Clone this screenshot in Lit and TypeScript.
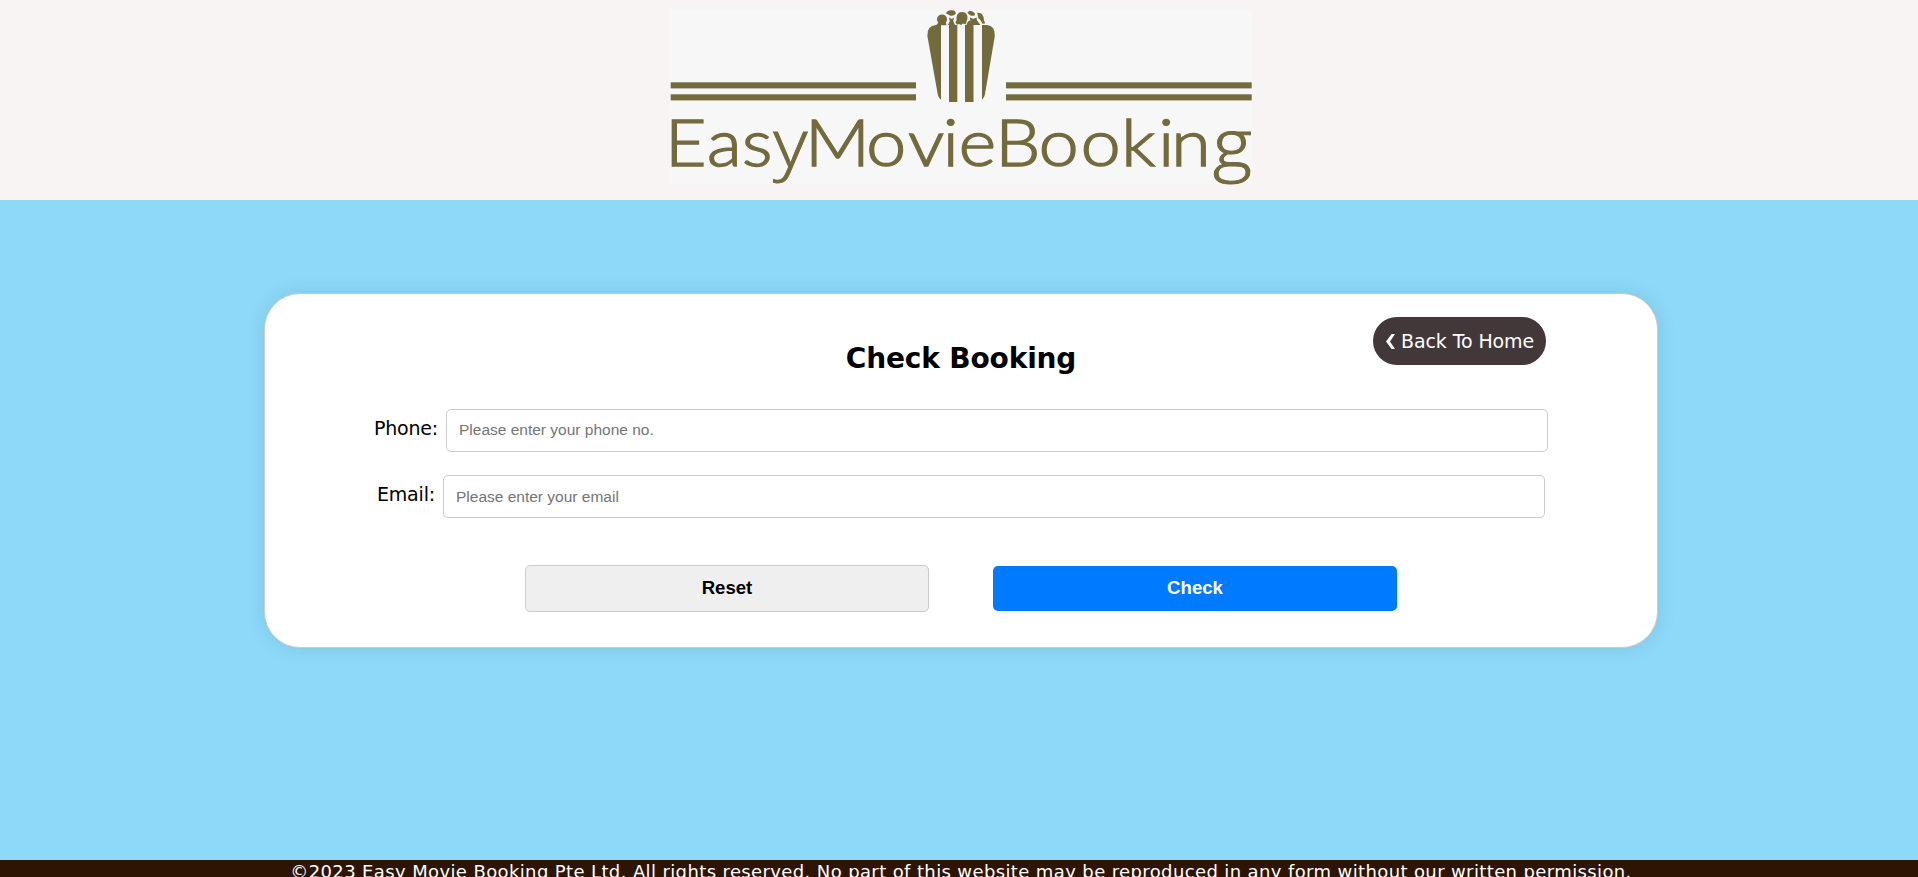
import { LitElement, html, css } from "lit";
import { customElement } from "lit/decorators.js";

const STRETCH = 1.1;
const stops = (...xs: number[]) => xs.map((x) => (x / STRETCH).toFixed(2)).join(" ");

@customElement("brand-logo")
class BrandLogo extends LitElement {
  static styles = css`
    :host { display: block; width: 582px; height: 174px; background: #f7f7f7; }
    svg { display: block; overflow: visible; }
    .ink { fill: #736a3e; }
    .word { fill: #736a3e; stroke: #736a3e; stroke-width: 1.5px; font-family: Lato, sans-serif; font-weight: 300; font-size: 65px; }
    .tail { font-family: "Open Sans", sans-serif; font-size: 67px; stroke-width: 1px; }
    .g { font-size: 68px; }
  `;
  render() {
    return html`<svg width="582" height="174" viewBox="670 10 582 174">
      <g class="ink">
        <rect x="670.7" y="82.3" width="245.3" height="6.1" />
        <rect x="670.7" y="94.3" width="245.3" height="6.1" />
        <rect x="1006" y="82.3" width="245.7" height="6.1" />
        <rect x="1006" y="94.3" width="245.7" height="6.1" />
        <path d="M941 25V99.4Q938.6 98.5 937.7 94L927.4 36Q926.8 25.6 936 25Z" />
        <path d="M982 25V99.4Q983.8 98.5 985 94L994.8 36Q995.2 25.6 987 25Z" />
        <rect x="949" y="25" width="8.3" height="77" />
        <rect x="965" y="25" width="8.5" height="77" />
        <path d="M936.2 25.2L938.2 22.7A5 5 0 1 1 945.8 22.7L946.6 25.2Z" />
        <path d="M945.8 13.2Q947.6 9.8 952 10.2Q955.8 10.6 955.8 13.5Q953 16.8 949.5 15.2Z" />
        <path d="M949 17.6L951.8 19L954.2 17.4L953.2 21L955 25H947.8L949.8 21.5Z" />
        <path d="M956.5 20.5Q955.8 12.2 962 12Q968.3 12.4 967.4 19L965.6 24.3L963 23.4L961 25L959 24L957 24.8L955.4 22Z" />
        <path d="M967.4 12.4Q970 9.9 973.3 12.1Q975.8 13.5 974.5 15.4Q971 16.6 969.2 14.4Z" />
        <path d="M966.4 25Q967.5 20.4 970.6 20.5L969.6 17.4L973.2 18.8L976.8 17.6L976.8 20L980.4 25Z" />
        <path d="M977.2 12.8Q982 12.5 983.6 17.2Q983.4 19.5 985.2 23.5L982.3 23.7Q980.6 19 978.4 18.4Z" />
      </g>
      <text class="word" transform="scale(1.1 1)" y="166 166 166 167.5 166 166 166 166 166 166 166 166 166 166 166 168"
        x=${stops(665, 707, 742, 773.5, 805, 866.3, 908.3, 942.8, 958.8, 995.3, 1038.8, 1080.8, 1121.3, 1158.3, 1171.3, 1213)}
      >Eas<tspan class="tail">y</tspan>MovieBookin<tspan class="tail g">g</tspan></text>
    </svg>`;
  }
}

@customElement("app-root")
class AppRoot extends LitElement {
  static styles = css`
    :host { display: flex; flex-direction: column; height: 877px; overflow: hidden; background: #8dd9f9; font-family: Verdana, "DejaVu Sans", sans-serif; color: #000; }
    * { box-sizing: border-box; }
    .top { height: 200px; flex: none; background: #f8f4f3; display: flex; justify-content: center; padding-top: 10px; padding-left: 4px; }
    .main { height: 660px; flex: none; padding: 93px 260px 0 264px; }
    .card { width: 1394px; height: 355px; border: 1px solid #ccc; border-radius: 36px; background: #fff; box-shadow: 0 0 20px rgba(0,0,0,.1); padding: 23px 109px 0 109px; }
    .head { display: grid; grid-template-columns: 1fr auto 1fr; height: 92px; align-items: start; }
    h2 { grid-column: 2; margin: 23px 0 0; font-size: 28px; line-height: 37px; font-weight: 700; white-space: nowrap; letter-spacing: -0.15px; }
    .back { justify-self: end; margin-right: 2px; width: 173px; height: 48px; border-radius: 24px; background: #433839; color: #fff; display: flex; align-items: center; padding-left: 12.5px; gap: 6.5px; font-size: 19px; letter-spacing: -0.1px; text-decoration: none; white-space: nowrap; }
    .row { display: flex; height: 66px; align-items: flex-start; white-space: nowrap; }
    .row label { flex: none; width: 72px; line-height: 38px; font-size: 19px; letter-spacing: -0.2px; }
    .row.email { padding-left: 3px; }
    .row.email label { width: 66px; }
    input { flex: none; width: 1102px; height: 43px; border: 1px solid #ccc; border-radius: 5px; padding: 0 12px 1px; font: 15.5px "Liberation Sans", Arial, sans-serif; background: #fff; outline: 0; }
    .email input { padding-bottom: 0; }
    input::placeholder { color: #757575; opacity: 1; }
    .actions { display: flex; gap: 64px; padding: 24px 0 0 151px; align-items: center; }
    button { height: 47px; width: 404px; border-radius: 5px; border: 1px solid #ccc; background: #efefef; font: 700 18.6px "Liberation Sans", Arial, sans-serif; padding: 0 0 2px; color: #000; }
    .check { height: 45px; border: 0; background: #007bff; color: #fff; }
    footer { height: 40px; flex: none; background: #2e1503; color: #fff; text-align: center; font-size: 18px; letter-spacing: 0.38px; line-height: 23px; white-space: nowrap; padding-left: 4px; }
  `;
  render() {
    return html`
      <header class="top"><brand-logo></brand-logo></header>
      <main class="main">
        <section class="card">
          <div class="head">
            <h2>Check Booking</h2>
            <a class="back"><svg width="9" height="15" viewBox="0 0 9 15"><path d="M5.6 0H9L4 7.5L9 15H5.6L0 7.5Z" fill="#fff" /></svg><span>Back To Home</span></a>
          </div>
          <div class="row"><label>Phone:</label><input placeholder="Please enter your phone no." /></div>
          <div class="row email"><label>Email:</label><input placeholder="Please enter your email" /></div>
          <div class="actions"><button>Reset</button><button class="check">Check</button></div>
        </section>
      </main>
      <footer>©2023 Easy Movie Booking Pte Ltd. All rights reserved. No part of this website may be reproduced in any form without our written permission.</footer>
    `;
  }
}
